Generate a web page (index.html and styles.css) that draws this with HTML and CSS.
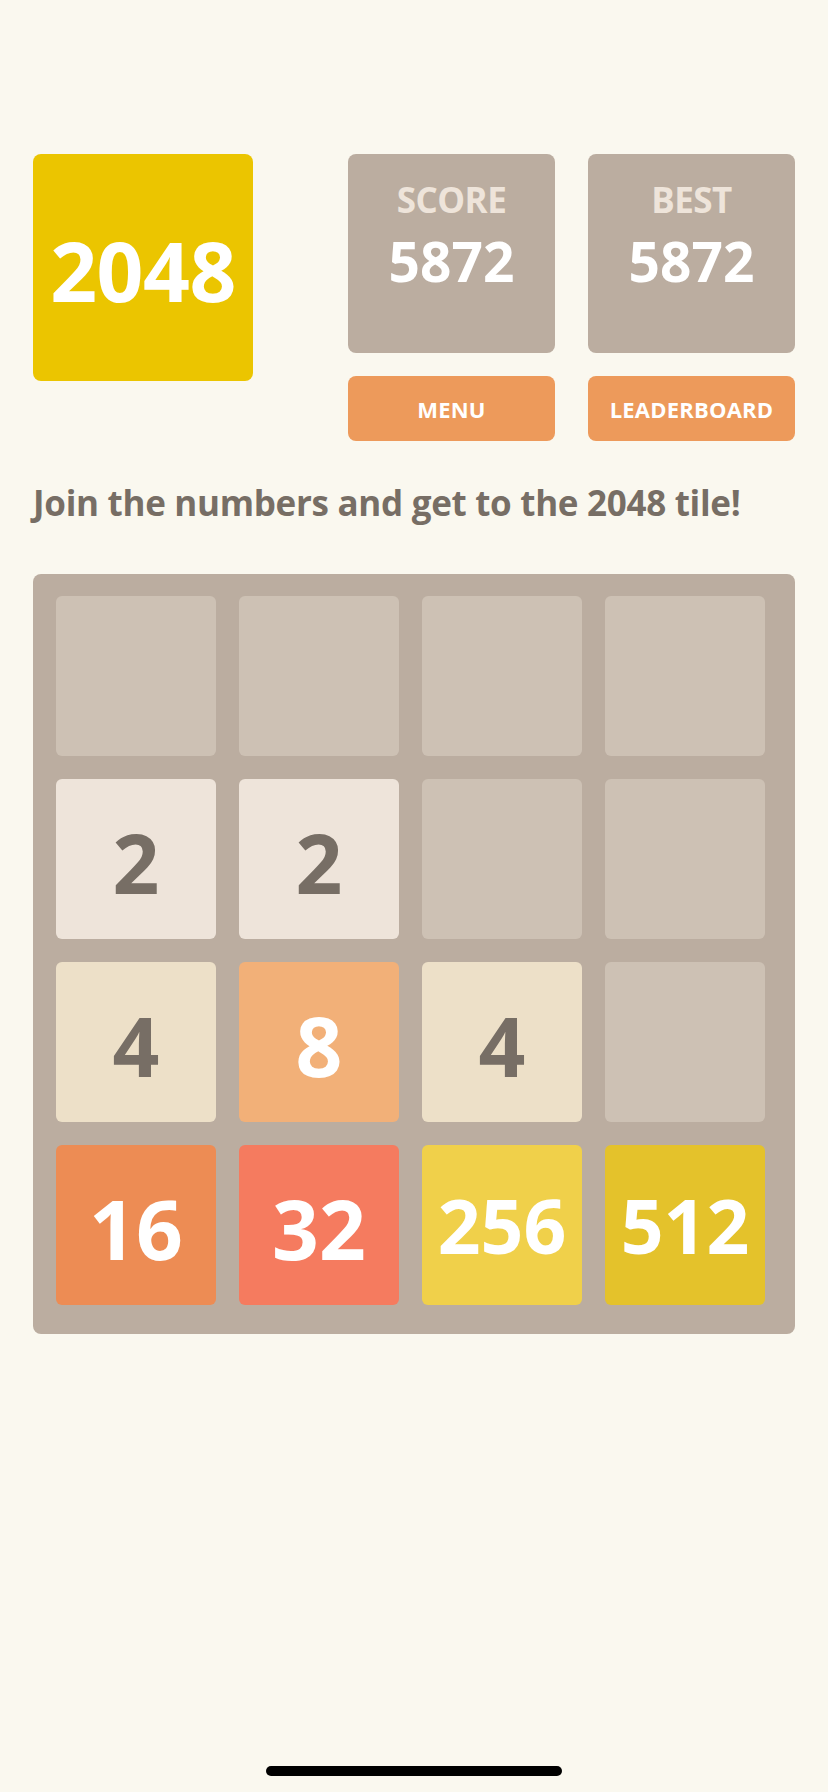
FILE: index.html
```html
<!DOCTYPE html>
<html lang="en">
<head>
<meta charset="utf-8">
<title>2048</title>
<link rel="stylesheet" href="styles.css">
</head>
<body>
<div class="page">
  <header class="header">
    <div class="logo">2048</div>
    <div class="side">
      <div class="scores">
        <div class="score-box">
          <div class="score-label">SCORE</div>
          <div class="score-value">5872</div>
        </div>
        <div class="score-box">
          <div class="score-label">BEST</div>
          <div class="score-value">5872</div>
        </div>
      </div>
      <div class="buttons">
        <div class="btn">MENU</div>
        <div class="btn">LEADERBOARD</div>
      </div>
    </div>
  </header>
  <p class="tagline">Join the numbers and get to the 2048 tile!</p>
  <div class="board">
    <div class="tile"></div>
    <div class="tile"></div>
    <div class="tile"></div>
    <div class="tile"></div>
    <div class="tile t2">2</div>
    <div class="tile t2">2</div>
    <div class="tile"></div>
    <div class="tile"></div>
    <div class="tile t4">4</div>
    <div class="tile t8">8</div>
    <div class="tile t4">4</div>
    <div class="tile"></div>
    <div class="tile t16">16</div>
    <div class="tile t32">32</div>
    <div class="tile t256 three">256</div>
    <div class="tile t512 three">512</div>
  </div>
  <div class="spacer"></div>
  <div class="home-bar"></div>
</div>
</body>
</html>
```
FILE: styles.css
```css
html, body {
  margin: 0;
  padding: 0;
  background: #FAF8EF;
}
body {
  font-family: "Open Sans", "Noto Sans", sans-serif;
  font-weight: 700;
  color: #776E65;
}
.page {
  width: 828px;
  height: 1792px;
  box-sizing: border-box;
  padding: 154px 33px 0 33px;
  display: flex;
  flex-direction: column;
}
.header {
  display: flex;
  justify-content: space-between;
  align-items: flex-start;
}
.logo {
  width: 220px;
  height: 227px;
  background: #EBC500;
  border-radius: 8px;
  color: #FFFFFF;
  font-size: 82px;
  line-height: 1;
  display: flex;
  align-items: center;
  justify-content: center;
  padding-top: 4px;
  box-sizing: border-box;
  letter-spacing: -0.5px;
}
.side {
  width: 447px;
  display: flex;
  flex-direction: column;
  gap: 23px;
}
.scores, .buttons {
  display: flex;
  justify-content: space-between;
}
.score-box {
  width: 207px;
  height: 199px;
  background: #BBADA0;
  border-radius: 8px;
  display: flex;
  flex-direction: column;
  align-items: center;
  box-sizing: border-box;
  padding-top: 24px;
}
.score-label {
  color: #EEE4DA;
  font-size: 35px;
  line-height: 44px;
  letter-spacing: -0.5px;
}
.score-value {
  color: #FFFFFF;
  font-size: 55px;
  line-height: 64px;
  margin-top: 7px;
}
.btn {
  width: 207px;
  height: 65px;
  background: #ED9A5B;
  border-radius: 8px;
  color: #FFFFFF;
  font-size: 22px;
  display: flex;
  align-items: center;
  justify-content: center;
  letter-spacing: 0.2px;
}
.tagline {
  margin: 42px 0 0 0;
  font-size: 35px;
  line-height: 40px;
  letter-spacing: -0.3px;
  color: #776E65;
}
.board {
  margin-top: 51px;
  width: 762px;
  box-sizing: border-box;
  background: #BBADA0;
  border-radius: 8px;
  padding: 22px 29px 29px 23px;
  display: grid;
  grid-template-columns: repeat(4, 160px);
  grid-template-rows: repeat(4, 160px);
  gap: 23px;
}
.tile {
  background: #CDC1B4;
  border-radius: 6px;
  display: flex;
  align-items: center;
  justify-content: center;
  font-size: 82px;
  line-height: 1;
  padding-top: 6px;
  box-sizing: border-box;
  color: #FFFFFF;
}
.tile.three {
  font-size: 75px;
  padding-top: 0;
}
.t2 { background: #EEE4DA; color: #776E65; }
.t4 { background: #EDE0C8; color: #776E65; }
.t8 { background: #F2B078; }
.t16 { background: #ED8C54; }
.t32 { background: #F57B5F; }
.t256 { background: #F0D04A; }
.t512 { background: #E4C22B; }
.spacer {
  flex: 1;
}
.home-bar {
  align-self: center;
  width: 296px;
  height: 10px;
  border-radius: 5px;
  background: #000000;
  margin-bottom: 16px;
}
```
